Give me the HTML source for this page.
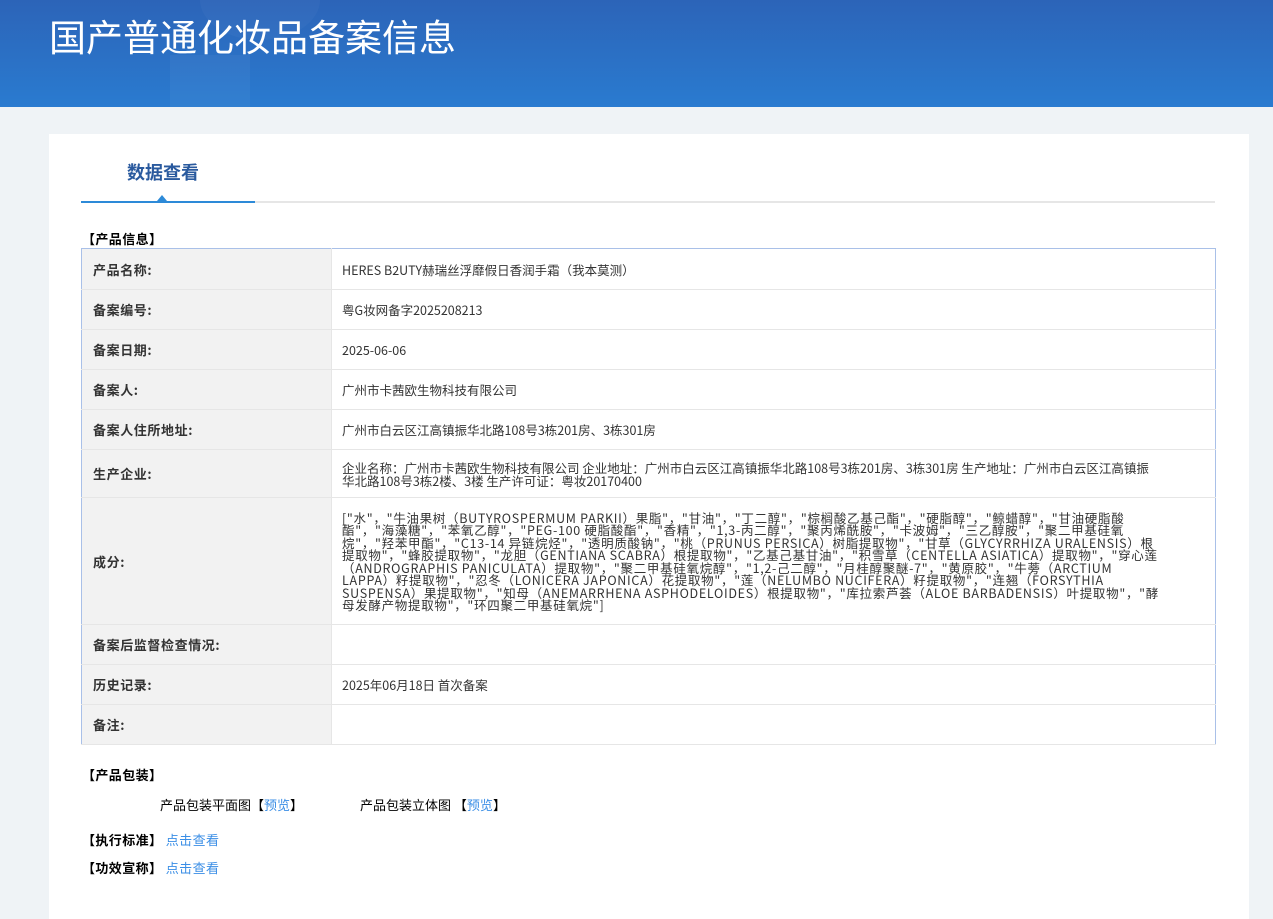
<!DOCTYPE html>
<html><head><meta charset="utf-8"><style>
*{margin:0;padding:0;box-sizing:border-box}
body{width:1273px;height:919px;overflow:hidden;background:#eff3f6;font-family:"Noto Sans CJK SC","Liberation Sans",sans-serif;font-size:12px;color:#333;position:relative}
.hd{position:absolute;left:0;top:0;width:1273px;height:107px;background:linear-gradient(180deg,#2c64b8 0%,#2a7bd0 100%);overflow:hidden}
.hd .c1{position:absolute;left:170px;top:55px;width:80px;height:60px;background:rgba(255,255,255,.04)}
.hd .c2{position:absolute;left:200px;top:-40px;width:120px;height:80px;border-radius:50%;background:rgba(255,255,255,.03)}
.hd h1{position:absolute;left:49px;top:8px;font-size:37px;font-weight:normal;color:#fff}
.panel{position:absolute;left:49px;top:134px;width:1200px;height:785px;background:#fff}
.tab{position:absolute;left:127px;top:159px;font-size:18px;font-weight:bold;color:#2a5a9e}
.line{position:absolute;left:81px;top:201px;width:1134px;height:2px;background:#e6e6e6}
.line b{position:absolute;left:0;top:0;width:174px;height:2px;background:#2d8ad8}
.tri{position:absolute;left:157px;top:195px;width:0;height:0;border-left:5px solid transparent;border-right:5px solid transparent;border-bottom:6px solid #2d8ad8}
.sec{position:absolute;font-weight:bold;color:#000;font-size:13px;line-height:16px;letter-spacing:0.4px}
table{position:absolute;left:81px;top:248px;width:1135px;border-collapse:collapse;border:1px solid #a9c0e8}
td{border-bottom:1px solid #e6e6e6;vertical-align:middle;font-size:12.5px}
td.l{width:250px;background:#f2f2f2;font-weight:bold;color:#333;padding-left:11px;border-right:1px solid #e6e6e6;font-size:13px;letter-spacing:0.6px}
td.v{padding-left:10px;padding-right:55px}
.ing{line-height:12.5px;padding-top:10px;padding-bottom:9px;letter-spacing:0.7px}
a{color:#3a8ee6;text-decoration:none}
.t{position:absolute;color:#000;font-size:13px;line-height:16px}
</style></head><body>
<div class="hd"><div class="c1"></div><div class="c2"></div><h1>国产普通化妆品备案信息</h1></div>
<div class="panel"></div>
<div class="tab">数据查看</div>
<div class="line"><b></b></div><div class="tri"></div>
<div class="sec" style="left:82px;top:231px">【产品信息】</div>
<table>
<tr style="height:41px"><td class="l">产品名称:</td><td class="v">HERES B2UTY赫瑞丝浮靡假日香润手霜（我本莫测）</td></tr>
<tr style="height:40px"><td class="l">备案编号:</td><td class="v">粤G妆网备字2025208213</td></tr>
<tr style="height:40px"><td class="l">备案日期:</td><td class="v">2025-06-06</td></tr>
<tr style="height:40px"><td class="l">备案人:</td><td class="v">广州市卡茜欧生物科技有限公司</td></tr>
<tr style="height:40px"><td class="l">备案人住所地址:</td><td class="v">广州市白云区江高镇振华北路108号3栋201房、3栋301房</td></tr>
<tr style="height:48px"><td class="l">生产企业:</td><td class="v" style="line-height:13px">企业名称：广州市卡茜欧生物科技有限公司 企业地址：广州市白云区江高镇振华北路108号3栋201房、3栋301房 生产地址：广州市白云区江高镇振华北路108号3栋2楼、3楼 生产许可证：粤妆20170400</td></tr>
<tr style="height:127px"><td class="l">成分:</td><td class="v ing">["水"，"牛油果树（BUTYROSPERMUM PARKII）果脂"，"甘油"，"丁二醇"，"棕榈酸乙基己酯"，"硬脂醇"，"鲸蜡醇"，"甘油硬脂酸酯"，"海藻糖"，"苯氧乙醇"，"PEG-100 硬脂酸酯"，"香精"，"1,3-丙二醇"，"聚丙烯酰胺"，"卡波姆"，"三乙醇胺"，"聚二甲基硅氧烷"，"羟苯甲酯"，"C13-14 异链烷烃"，"透明质酸钠"，"桃（PRUNUS PERSICA）树脂提取物"，"甘草（GLYCYRRHIZA URALENSIS）根提取物"，"蜂胶提取物"，"龙胆（GENTIANA SCABRA）根提取物"，"乙基己基甘油"，"积雪草（CENTELLA ASIATICA）提取物"，"穿心莲（ANDROGRAPHIS PANICULATA）提取物"，"聚二甲基硅氧烷醇"，"1,2-己二醇"，"月桂醇聚醚-7"，"黄原胶"，"牛蒡（ARCTIUM LAPPA）籽提取物"，"忍冬（LONICERA JAPONICA）花提取物"，"莲（NELUMBO NUCIFERA）籽提取物"，"连翘（FORSYTHIA SUSPENSA）果提取物"，"知母（ANEMARRHENA ASPHODELOIDES）根提取物"，"库拉索芦荟（ALOE BARBADENSIS）叶提取物"，"酵母发酵产物提取物"，"环四聚二甲基硅氧烷"]</td></tr>
<tr style="height:40px"><td class="l">备案后监督检查情况:</td><td class="v"></td></tr>
<tr style="height:40px"><td class="l">历史记录:</td><td class="v">2025年06月18日 首次备案</td></tr>
<tr style="height:40px"><td class="l">备注:</td><td class="v"></td></tr>
</table>
<div class="sec" style="left:82px;top:767px">【产品包装】</div>
<div class="t" style="left:160px;top:797px">产品包装平面图【<a>预览</a>】</div>
<div class="t" style="left:360px;top:797px">产品包装立体图 【<a>预览</a>】</div>
<div class="sec" style="left:82px;top:832px">【执行标准】 <a style="font-weight:normal">点击查看</a></div>
<div class="sec" style="left:82px;top:860px">【功效宣称】 <a style="font-weight:normal">点击查看</a></div>
</body></html>
